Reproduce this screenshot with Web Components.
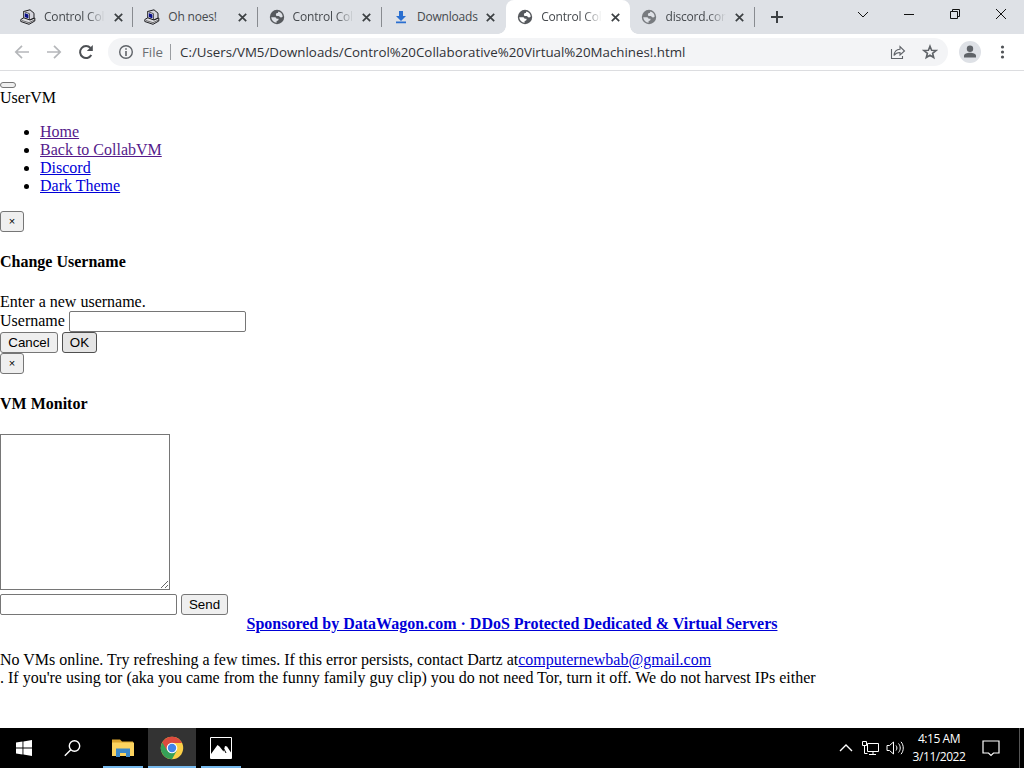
<!DOCTYPE html>
<html lang="en">
<head>
<meta charset="utf-8">
<title>Control Collaborative Virtual Machines!</title>
<style>
  html, body {
    margin: 0;
    height: 100%;
    overflow: hidden;
    background: #fff;
  }
</style>
</head>
<body>
<desktop-screen>
  <tab-strip slot="tabs">
    <browser-tab icon="pc">Control Collaborative</browser-tab>
    <browser-tab icon="pc">Oh noes!</browser-tab>
    <browser-tab icon="globe">Control Collaborative</browser-tab>
    <browser-tab icon="download" last>Downloads</browser-tab>
    <browser-tab icon="globe" active>Control Collaborative</browser-tab>
    <browser-tab icon="globe" faded>discord.com</browser-tab>
  </tab-strip>
  <address-bar slot="toolbar">C:/Users/VM5/Downloads/Control%20Collaborative%20Virtual%20Machines!.html</address-bar>
  <user-vm-page slot="page"></user-vm-page>
  <task-bar slot="taskbar"></task-bar>
</desktop-screen>

<script>
const icons = {
  pc: `<svg width="16" height="16" viewBox="0 0 16 16">
    <path d="M3.500 2.500L10 .8l4 3.400v5L9.500 11 3.500 9z" fill="#d4d4dc" stroke="#1c1c20"/>
    <path d="M3.500 2.500l6 2.200V11l-6-2z" fill="#f4f4f6" stroke="#333" stroke-width=".8"/>
    <path d="M4.600 4l3.900 1.400v4L4.600 8z" fill="#0b1187"/>
    <path d="M.8 10.500l3-1.700L10 11l4.800-2v3L9 15.300.8 12.500z" fill="#dcdce0" stroke="#1c1c20"/>
    <path d="M2 11.500l7 2.200 5-2.500" fill="none" stroke="#555" stroke-width=".8"/>
  </svg>`,
  globe: `<svg width="16" height="16" viewBox="0 0 16 16">
    <circle cx="8" cy="8" r="7.200" fill="#56595d"/>
    <path d="M9.500 2.400c2.400.6 4 2.600 4.200 5-.6.900-1.500 1.200-2.600.9-.5-.900-1.200-1.200-2.300-1.200-1.300 0-2-.7-1.900-1.700.1-.9.800-1.300 2-1.300 0-.9.100-1.400.6-1.700zM2.200 8.300h3c1.300 0 2 .4 2.400 1.400h2c0 1.500-.7 2.200-2 2.200v1.900C4.600 13.500 2.400 11.300 2.200 8.300z" fill="var(--land, #dee1e6)"/>
  </svg>`,
  download: `<svg width="16" height="16" viewBox="0 0 16 16" fill="#2a6fd0">
    <path d="M6 2h4v5h3l-5 5-5-5h3zM3 12.600h10v1.600H3z"/>
  </svg>`
};

// Registers an element whose shadow root is cloned from the given markup
const define = (name, markup) => {
  const template = document.createElement('template');
  template.innerHTML = markup;

  window.customElements.define(name, class extends HTMLElement {
    constructor() {
      super();
      this.attachShadow({ mode: 'open' });
      this.shadowRoot.appendChild(template.content.cloneNode(true));
    }
  });
};

define('desktop-screen', `
  <style>
    :host {
      display: grid;
      grid-template-rows: 34px 37px minmax(0, 1fr) 40px;
      width: 100%;
      height: 768px;
      background: #fff;
    }
  </style>
  <slot name="tabs"></slot>
  <slot name="toolbar"></slot>
  <slot name="page"></slot>
  <slot name="taskbar"></slot>
`);

define('tab-strip', `
  <style>
    :host {
      display: flex;
      box-sizing: border-box;
      padding-left: 9px;
      background: #dee1e6;
    }

    .new {
      margin: 10px 0 0 15px;
    }

    .controls {
      display: flex;
      align-items: center;
      gap: 30px;
      height: 28px;
      margin-left: auto;
      padding-right: 15px;
    }

    svg {
      display: block;
      fill: none;
      stroke: #111;
    }
  </style>
  <slot></slot>
  <svg class="new" width="14" height="14"><path d="M7 1v12M1 7h12" stroke="#3c4043" stroke-width="2"/></svg>
  <div class="controls">
    <svg width="16" height="16"><path d="M3 6l5 5 5-5" stroke-width="1"/></svg>
    <svg width="16" height="16"><path d="M3 8.500h10"/></svg>
    <svg width="16" height="16"><path d="M3.500 5.500h7v7h-7zM5.500 5.500v-2h7v7h-2"/></svg>
    <svg width="16" height="16"><path d="M3 3l10 10M13 3L3 13" stroke-width="1"/></svg>
  </div>
`);

const tabTemplate = document.createElement('template');

tabTemplate.innerHTML = `
  <style>
    :host {
      display: flex;
      position: relative;
      align-items: center;
      box-sizing: border-box;
      flex: none;
      width: 124.300px;
      height: 34px;
      padding-left: 11px;
      color: #45494d;
      font: 12px/16px "Open Sans", sans-serif;
      letter-spacing: -0.200px;
    }

    :host([active]) {
      --land: #fff;
      background: #fff;
      border-radius: 8px 8px 0 0;
    }

    /* the flares at the foot of the selected tab */
    :host([active])::before,
    :host([active])::after {
      content: '';
      position: absolute;
      bottom: 0;
      width: 8px;
      height: 8px;
    }

    :host([active])::before {
      left: -8px;
      background: radial-gradient(circle at 0 0, transparent 7.500px, #fff 8px);
    }

    :host([active])::after {
      right: -8px;
      background: radial-gradient(circle at 100% 0, transparent 7.500px, #fff 8px);
    }

    .icon {
      flex: none;
      width: 16px;
      height: 16px;
    }

    :host([faded]) .icon {
      opacity: .75;
    }

    .title {
      width: 61px;
      margin-left: 8px;
      overflow: hidden;
      white-space: nowrap;
      -webkit-mask-image: linear-gradient(90deg, #000 70%, transparent);
      mask-image: linear-gradient(90deg, #000 70%, transparent);
    }

    .title.whole {
      -webkit-mask-image: none;
      mask-image: none;
    }

    .close {
      flex: none;
      margin-left: 8.500px;
    }

    .line {
      flex: none;
      width: 1px;
      height: 20px;
      margin-left: auto;
      background: #888b90;
    }

    :host([active]) .line,
    :host([last]) .line {
      visibility: hidden;
    }
  </style>
  <span class="icon"></span>
  <span class="title"><slot></slot></span>
  <svg class="close" width="9" height="9"><path d="M.8.8l7.400 7.400M8.200.8L.8 8.200" stroke="#3c4043" stroke-width="1.700"/></svg>
  <span class="line"></span>
`;

class BrowserTab extends HTMLElement {
  constructor() {
    super();
    this.attachShadow({ mode: 'open' });
  }

  connectedCallback() {
    this.shadowRoot.appendChild(tabTemplate.content.cloneNode(true));
    this.shadowRoot.querySelector('.icon').innerHTML = icons[this.getAttribute('icon')];
    // short titles are not faded out
    if (this.textContent.length < 10) {
      this.shadowRoot.querySelector('.title').classList.add('whole');
    }
  }
}

window.customElements.define('browser-tab', BrowserTab);

define('address-bar', `
  <style>
    :host {
      display: flex;
      align-items: center;
      box-sizing: border-box;
      padding: 0 14px;
      border-bottom: 1px solid #dcdde0;
      background: #fff;
      color: #303236;
      font: 13.320px/20px "Open Sans", sans-serif;
    }

    svg {
      display: block;
      flex: none;
      fill: none;
      stroke: #5f6368;
    }

    .nav {
      display: flex;
      gap: 16px;
      width: 94px;
    }

    .box {
      display: flex;
      flex: 1;
      align-items: center;
      box-sizing: border-box;
      height: 28px;
      padding: 0 10px;
      border-radius: 14px;
      background: #f3f4f6;
    }

    .scheme {
      margin-left: 8px;
      width: 20px;
      color: #6a6e72;
    }

    .rule {
      width: 1px;
      height: 16px;
      margin: 0 9px 0 8px;
      background: #9a9da1;
    }

    .url {
      flex: 1;
      white-space: nowrap;
    }

    .star {
      margin: 0 0 0 16px;
    }

    .avatar {
      margin: 0 14px 0 11px;
    }
  </style>
  <div class="nav">
    <svg width="16" height="16" style="stroke: #b5b7ba"><path d="M15 8H2M8 1.800L1.800 8 8 14.200" stroke-width="1.700"/></svg>
    <svg width="16" height="16" style="stroke: #b5b7ba"><path d="M1 8h13M8 1.800L14.200 8 8 14.200" stroke-width="1.700"/></svg>
    <svg width="16" height="16"><path d="M13.300 11A6 6 0 1 1 12.500 4" stroke="#4d5054" stroke-width="2"/><path d="M14.800 1v6h-6z" fill="#4d5054" stroke="none"/></svg>
  </div>
  <div class="box">
    <svg width="16" height="16"><circle cx="8" cy="8" r="6.300" stroke-width="1.400"/><path d="M8 7v5M8 4.200v1.600" stroke-width="1.600"/></svg>
    <span class="scheme">File</span>
    <span class="rule"></span>
    <span class="url"><slot></slot></span>
    <svg width="16" height="16"><path d="M1.500 5v9.500h11V12" stroke-width="1.100"/><path d="M4 11.500c.4-4 2.500-6 6-6.200V2.500L14.500 7 10 11V8.500c-2.700 0-4.500.8-6 3z" stroke-width="1.100"/></svg>
    <svg class="star" width="16" height="16"><path d="M8 2.200l1.600 4 4.400.3-3.400 2.800 1.100 4.200L8 11.200l-3.700 2.300 1.100-4.200L2 6.500l4.400-.3z" stroke-width="1.600"/></svg>
  </div>
  <svg class="avatar" width="22" height="22" viewBox="0 0 22 22" stroke="none" style="stroke: none"><circle cx="11" cy="11" r="11" fill="#dee1e6"/><circle cx="11" cy="7.800" r="3.200" fill="#5f6368"/><path d="M5 16.500v-2c0-1.700 3-2.800 6-2.800s6 1.100 6 2.800v2z" fill="#5f6368"/></svg>
  <svg width="15" height="16" viewBox="0 0 15 16" style="fill: #505357; stroke: none"><circle cx="7.500" cy="3" r="1.600"/><circle cx="7.500" cy="8" r="1.600"/><circle cx="7.500" cy="13" r="1.600"/></svg>
`);

define('user-vm-page', `
  <style>
    :host {
      display: block;
      overflow: hidden;
      color: #000;
      font: 16px/18px "Liberation Serif", serif;
    }

    .toggle {
      height: 18px;
      box-sizing: border-box;
      padding-top: 11px;
    }

    ul {
      margin: 16px 0;
      padding-left: 40px;
    }

    h4 {
      margin: 21px 0 22px;
      font-size: 16px;
    }

    a {
      color: #0000d8;
    }

    a.visited {
      color: #551a8b;
    }

    .row {
      display: flex;
      align-items: center;
      gap: 4px;
      height: 21px;
    }

    label {
      padding-bottom: 2px;
    }

    input, textarea {
      display: block;
      box-sizing: border-box;
      margin: 0;
      border: 1px solid #767676;
      border-radius: 2px;
      background: #fff;
    }

    input {
      width: 177px;
      height: 21px;
    }

    textarea {
      width: 170px;
      height: 156px;
      margin-bottom: 4px;
      border-radius: 0;
    }

    center {
      font-weight: bold;
    }

    p {
      margin: 18px 0 0;
    }
  </style>
  <div class="toggle"><push-button style="width: 16px; height: 6px"></push-button></div>
  <div>UserVM</div>
  <ul>
    <li><a class="visited" href="#">Home</a></li>
    <li><a class="visited" href="#">Back to CollabVM</a></li>
    <li><a href="#">Discord</a></li>
    <li><a href="#">Dark Theme</a></li>
  </ul>
  <div class="row"><push-button style="width: 24px; --size: 11px">×</push-button></div>
  <h4>Change Username</h4>
  <div>Enter a new username.</div>
  <div class="row"><label>Username</label><input></div>
  <div class="row">
    <push-button style="width: 58px">Cancel</push-button>
    <push-button style="width: 35px; --face: #e5e5e5; --edge: #4f4f4f">OK</push-button>
  </div>
  <div class="row"><push-button style="width: 24px; --size: 11px">×</push-button></div>
  <h4 style="margin-bottom: 21px">VM Monitor</h4>
  <textarea></textarea>
  <div class="row"><input><push-button style="width: 47px">Send</push-button></div>
  <center><a href="#">Sponsored by DataWagon.com · DDoS Protected Dedicated &amp; Virtual Servers</a></center>
  <p>No VMs online. Try refreshing a few times. If this error persists, contact Dartz at<a href="#">computernewbab@gmail.com</a><br>. If you're using tor (aka you came from the funny family guy clip) you do not need Tor, turn it off. We do not harvest IPs either</p>
`);

define('push-button', `
  <style>
    :host {
      display: block;
      height: 21px;
    }

    button {
      display: block;
      box-sizing: border-box;
      width: 100%;
      height: 100%;
      padding: 0;
      border: 1px solid var(--edge, #767676);
      border-radius: 3px;
      background: var(--face, #efefef);
      color: #000;
      font: var(--size, 13.333px)/15px "Liberation Sans", sans-serif;
    }
  </style>
  <button><slot></slot></button>
`);

define('task-bar', `
  <style>
    :host {
      display: flex;
      background: #000;
      color: #fff;
      font: 12px/18px "Open Sans", sans-serif;
    }

    svg {
      display: block;
      flex: none;
    }

    .cell {
      display: grid;
      flex: none;
      place-items: center;
      box-sizing: border-box;
      width: 48px;
      height: 40px;
    }

    .running {
      background: linear-gradient(#76b9ed, #76b9ed) center bottom / 40px 2px no-repeat;
    }

    .current {
      background: linear-gradient(#76b9ed, #76b9ed) bottom / 100% 2px no-repeat #333;
    }

    .tray {
      display: flex;
      align-items: center;
      gap: 8px;
      margin-left: auto;
    }

    .clock {
      width: 54px;
      white-space: nowrap;
      text-align: center;
      letter-spacing: -0.450px;
    }

    .desktop {
      width: 4px;
      height: 40px;
      border-left: 1px solid #555;
    }
  </style>
  <div class="cell">
    <svg width="16" height="16" fill="#fff"><path d="M0 2.400l6.500-.9v6H0zM7.400 1.400L16 .1v7.400H7.400zM0 8.500h6.500v6L0 13.600zM7.400 8.500H16v7.400l-8.600-1.300z"/></svg>
  </div>
  <div class="cell">
    <svg width="17" height="17" fill="none" stroke="#fff" stroke-width="1.400"><circle cx="10.500" cy="6" r="5.200"/><path d="M6.800 9.700L.8 15.700"/></svg>
  </div>
  <div class="cell running" style="margin: 0 1px 0 3px">
    <svg width="22" height="20"><path d="M0 1.500h8l2 2h11V18H0z" fill="#dba52f"/><path d="M0 4.500h22V18H0z" fill="#fbd35f"/><path d="M4 19v-8.500h14V19h-4v-4H8v4z" fill="#3c88c8"/></svg>
  </div>
  <div class="cell current">
    <svg width="24" height="24" viewBox="0 0 24 24">
      <circle cx="12" cy="12" r="11.200" fill="#fbcf47"/>
      <path d="M12 12L2.300 6.400A11.200 11.200 0 0 0 12 23.200L16.700 14.700z" fill="#36a158"/>
      <path d="M2.300 6.400A11.200 11.200 0 0 1 21.700 6.400L22 7H12L7.300 14.700z" fill="#dc4b3e"/>
      <circle cx="12" cy="12" r="5.300" fill="#fff"/>
      <circle cx="12" cy="12" r="4.200" fill="#4284ea"/>
    </svg>
  </div>
  <div class="cell running" style="margin-left: 1px">
    <svg width="22" height="22"><path d="M.5.500h21v21H.5z" fill="#000" stroke="#fff"/><path d="M1 17l6.500-9 2 1.500 4 5 1.500-5.500 2 .5 4 6V21H1z" fill="#fff"/><path d="M14 12l2 4" stroke="#000"/></svg>
  </div>
  <div class="tray">
    <svg width="16" height="16" fill="none" stroke="#fff" stroke-width="1.400"><path d="M2 11l6-6 6 6"/></svg>
    <svg width="17" height="16" fill="none" stroke="#fff"><path d="M5.500 3.500h11v8h-11zM11 12v2.500M7 14.500h7M.500 1.500h4v4h-4zM2.500 5.500v8h3"/></svg>
    <svg width="18" height="16" style="margin-left: -1px" fill="none" stroke="#fff"><path d="M1 5.500h2.500l4-3.500v12l-4-3.500H1zM10 5.500c1.200 1.500 1.200 3.500 0 5M12.500 3.500c2.300 2.500 2.300 6.500 0 9M15 1.800c3 3.500 3 9 0 12.400"/></svg>
    <div class="clock">4:15 AM<br>3/11/2022</div>
    <svg width="18" height="18" style="margin: 0 11px 0 8px" fill="none" stroke="#fff" stroke-width="1.200"><path d="M1 2h16v12h-5.500L9 16.500 6.500 14H1z"/></svg>
    <div class="desktop"></div>
  </div>
`);
</script>
</body>
</html>
